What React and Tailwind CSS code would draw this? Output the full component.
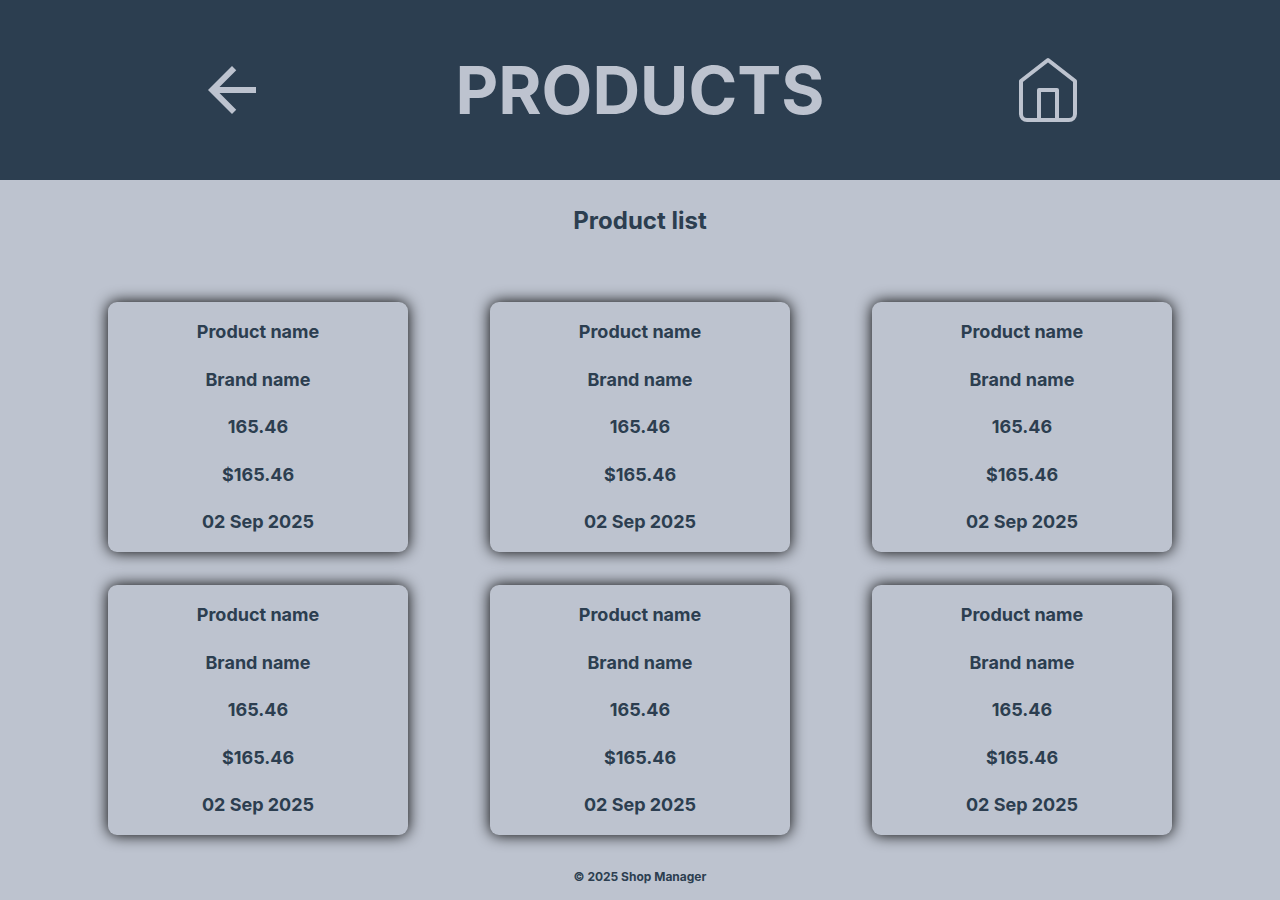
const products = Array.from({ length: 6 }, (_, index) => ({
  id: index + 1,
  name: "Product name",
  brand: "Brand name",
  quantity: "165.46",
  price: "$165.46",
  date: "02 Sep 2025",
}));

function BackIcon() {
  return (
    <svg viewBox="0 0 24 24" className="size-18" fill="currentColor" aria-hidden="true">
      <path d="M20 11H7.83l5.59-5.59L12 4l-8 8 8 8 1.41-1.41L7.83 13H20v-2z" />
    </svg>
  );
}

function HomeIcon() {
  return (
    <svg
      viewBox="0 0 72 72"
      className="size-18"
      fill="none"
      stroke="currentColor"
      strokeWidth="4"
      strokeLinecap="round"
      strokeLinejoin="round"
      aria-hidden="true"
    >
      <path d="M9 27 36 6l27 21v33a6 6 0 0 1-6 6H15a6 6 0 0 1-6-6z" />
      <path d="M27 66V36h18v30" />
    </svg>
  );
}

function ProductCard({ product }) {
  return (
    <li className="flex min-h-[250px] w-[300px] flex-col items-center justify-between rounded-[9px] bg-[#bdc3cf] py-[18px] text-lg/6 font-bold shadow-[0_0_15px_black]">
      <h3>{product.name}</h3>
      <p>{product.brand}</p>
      <p>{product.quantity}</p>
      <p>{product.price}</p>
      <p>{product.date}</p>
    </li>
  );
}

export default function App() {
  return (
    <div className="flex min-h-screen flex-col bg-[#bdc3cf] font-['Inter',sans-serif] text-[#2c3e50]">
      <header className="grid grid-cols-3 items-center justify-items-center bg-[#2c3e50] px-7 py-12 text-[#bdc3cf]">
        <a href="#back" aria-label="Back">
          <BackIcon />
        </a>
        <h1 className="text-[66px]/[84px] font-bold">PRODUCTS</h1>
        <a href="#home" aria-label="Home">
          <HomeIcon />
        </a>
      </header>
      <main className="flex-1">
        <h2 className="pt-[25px] text-center text-2xl/8 font-bold">Product list</h2>
        <ul className="mt-[65px] grid grid-cols-3 justify-items-center gap-y-[33px] px-[67px]">
          {products.map((product) => (
            <ProductCard key={product.id} product={product} />
          ))}
        </ul>
      </main>
      <footer className="pt-8 pb-[15px] text-center text-xs/4 font-bold">© 2025 Shop Manager</footer>
    </div>
  );
}
